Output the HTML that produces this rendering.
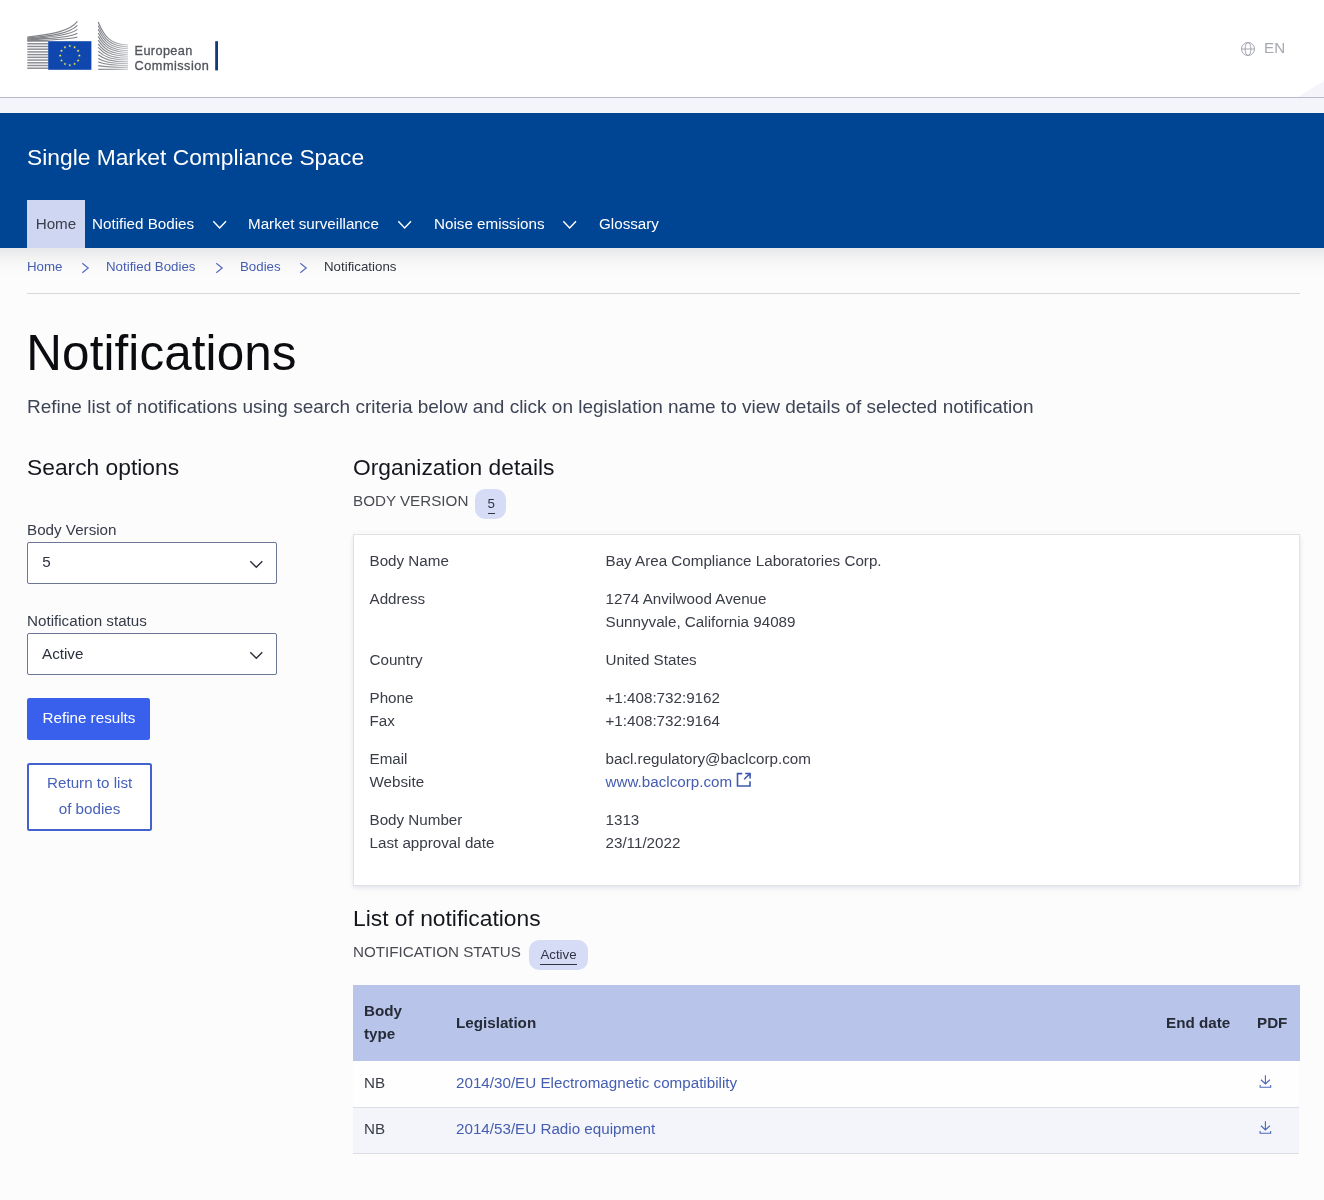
<!DOCTYPE html>
<html lang="en">
<head>
<meta charset="utf-8">
<title>Notifications - Single Market Compliance Space</title>
<style>
*{box-sizing:border-box;margin:0;padding:0}
html,body{width:1324px;height:1200px;overflow:hidden}
body{font-family:"Liberation Sans",Arial,sans-serif;color:#262b38;background:#fcfcfc;position:relative;font-size:15.2px}
a{text-decoration:none}
.t{position:absolute;white-space:nowrap;line-height:20px;font-weight:400}
.p{position:absolute}
svg{position:absolute;overflow:visible}
#w{position:absolute;left:0;top:0;width:1324px;height:1200px;background:#fcfcfc;will-change:transform}
#top{left:0;top:0;width:1324px;height:98px;background:#fff;border-bottom:1px solid #b9bcc8;overflow:hidden}
#strip{left:0;top:98px;width:1324px;height:15px;background:#f3f5fb}
#banner{left:0;top:113px;width:1324px;height:135px;background:#004494}
#shadow{left:0;top:248px;width:1324px;height:28px;background:linear-gradient(#e6e7e8,#f1f1f2 30%,#f9f9f9 65%,#fcfcfc)}
#hometab{left:27px;top:200px;width:58px;height:48px;background:#cfd6f2}
#bcline{left:27px;top:293px;width:1273px;height:1px;background:#d7d8dc}
.badge{height:30px;border-radius:10px;background:#d7dcf6}
.sel{left:27px;width:249.5px;height:42px;border:1px solid #6b7794;border-radius:2px;background:#fff}
#refine{left:27px;top:698px;width:123px;height:41.5px;background:#3860ed;border-radius:2.5px}
#ret{left:27px;top:763px;width:125px;height:67.5px;border:2px solid #4362cd;background:#fff;border-radius:2.5px}
#card{left:353px;top:534px;width:947px;height:352px;background:#fff;border:1px solid #e2e2e6;box-shadow:0 2px 4px rgba(9,49,142,.06),0 0 8px rgba(9,49,142,.03),0 4px 6px rgba(9,49,142,.03)}
#thead{left:353px;top:985px;width:947px;height:76px;background:#b8c4e9}
.row{left:353px;width:945.5px;height:46px;border-bottom:1px solid #dcdee6}
</style>
</head>
<body>
<div id="w">
<div class="p" id="top"><div class="p" style="left:1290px;top:78px;width:34px;height:20px;background:#f4f4fa;clip-path:polygon(6px 20px,34px 3px,34px 20px)"></div></div>
<div class="p" id="strip"></div>
<div class="p" id="banner"></div>
<div class="p" id="shadow"></div>
<div class="p" id="hometab"></div>
<svg style="left:0;top:0" width="240" height="98" viewBox="0 0 240 98" fill="none"><path d="M27.3 38.30H48.5" stroke="#8d8f94" stroke-width="1.5"/><path d="M27.3 41.02H48.5" stroke="#8d8f94" stroke-width="1.5"/><path d="M27.3 43.74H48.5" stroke="#8d8f94" stroke-width="1.5"/><path d="M27.3 46.46H48.5" stroke="#8d8f94" stroke-width="1.5"/><path d="M27.3 49.18H48.5" stroke="#8d8f94" stroke-width="1.5"/><path d="M27.3 51.90H48.5" stroke="#8d8f94" stroke-width="1.5"/><path d="M27.3 54.62H48.5" stroke="#8d8f94" stroke-width="1.5"/><path d="M27.3 57.34H48.5" stroke="#8d8f94" stroke-width="1.5"/><path d="M27.3 60.06H48.5" stroke="#8d8f94" stroke-width="1.5"/><path d="M27.3 62.78H48.5" stroke="#8d8f94" stroke-width="1.5"/><path d="M27.3 65.50H48.5" stroke="#8d8f94" stroke-width="1.5"/><path d="M27.3 68.22H48.5" stroke="#8d8f94" stroke-width="1.5"/><path d="M27.3 37.00C52 34.54 70 31.03 77.4 21.30" stroke="#808287" stroke-width="1.1"/><path d="M27.3 37.95C52 35.98 70 33.18 77.4 25.40" stroke="#808287" stroke-width="1.1"/><path d="M27.3 38.90C52 37.41 70 35.29 77.4 29.40" stroke="#808287" stroke-width="1.1"/><path d="M27.3 39.85C52 38.82 70 37.36 77.4 33.30" stroke="#808287" stroke-width="1.1"/><path d="M27.3 40.80C52 40.20 70 39.36 77.4 37.00" stroke="#808287" stroke-width="1.1"/><path d="M98.2 22.00C104 36.26 110 44.54 128 45.00" stroke="url(#gr)" stroke-width="1.15"/><path d="M98.2 25.64C104 38.80 110 46.44 128 46.87" stroke="url(#gr)" stroke-width="1.15"/><path d="M98.2 29.28C104 41.34 110 48.35 128 48.74" stroke="url(#gr)" stroke-width="1.15"/><path d="M98.2 32.92C104 43.88 110 50.25 128 50.61" stroke="url(#gr)" stroke-width="1.15"/><path d="M98.2 36.55C104 46.43 110 52.16 128 52.48" stroke="url(#gr)" stroke-width="1.15"/><path d="M98.2 40.19C104 48.97 110 54.06 128 54.35" stroke="url(#gr)" stroke-width="1.15"/><path d="M98.2 43.83C104 51.51 110 55.97 128 56.22" stroke="url(#gr)" stroke-width="1.15"/><path d="M98.2 47.47C104 54.05 110 57.87 128 58.08" stroke="url(#gr)" stroke-width="1.15"/><path d="M98.2 51.11C104 56.59 110 59.78 128 59.95" stroke="url(#gr)" stroke-width="1.15"/><path d="M98.2 54.75C104 59.13 110 61.68 128 61.82" stroke="url(#gr)" stroke-width="1.15"/><path d="M98.2 58.38C104 61.68 110 63.59 128 63.69" stroke="url(#gr)" stroke-width="1.15"/><path d="M98.2 62.02C104 64.22 110 65.49 128 65.56" stroke="url(#gr)" stroke-width="1.15"/><path d="M98.2 65.66C104 66.76 110 67.40 128 67.43" stroke="url(#gr)" stroke-width="1.15"/><path d="M98.2 69.30C104 69.30 110 69.30 128 69.30" stroke="url(#gr)" stroke-width="1.15"/><defs><linearGradient id="gr" x1="98" y1="0" x2="128" y2="0" gradientUnits="userSpaceOnUse"><stop offset="0" stop-color="#7d7f85"/><stop offset="0.55" stop-color="#9a9ca1"/><stop offset="1" stop-color="#c9cacd"/></linearGradient></defs><rect x="48.2" y="41.2" width="43.2" height="28.6" fill="#0f47af"/><polygon points="69.80,44.45 70.16,45.50 71.27,45.52 70.39,46.19 70.71,47.25 69.80,46.62 68.89,47.25 69.21,46.19 68.33,45.52 69.44,45.50" fill="#f5e84a"/><polygon points="74.60,45.74 74.96,46.78 76.07,46.81 75.19,47.48 75.51,48.54 74.60,47.91 73.69,48.54 74.01,47.48 73.13,46.81 74.24,46.78" fill="#f5e84a"/><polygon points="78.11,49.25 78.48,50.30 79.59,50.32 78.70,50.99 79.02,52.05 78.11,51.42 77.20,52.05 77.52,50.99 76.64,50.32 77.75,50.30" fill="#f5e84a"/><polygon points="79.40,54.05 79.76,55.10 80.87,55.12 79.99,55.79 80.31,56.85 79.40,56.22 78.49,56.85 78.81,55.79 77.93,55.12 79.04,55.10" fill="#f5e84a"/><polygon points="78.11,58.85 78.48,59.90 79.59,59.92 78.70,60.59 79.02,61.65 78.11,61.02 77.20,61.65 77.52,60.59 76.64,59.92 77.75,59.90" fill="#f5e84a"/><polygon points="74.60,62.36 74.96,63.41 76.07,63.43 75.19,64.11 75.51,65.17 74.60,64.53 73.69,65.17 74.01,64.11 73.13,63.43 74.24,63.41" fill="#f5e84a"/><polygon points="69.80,63.65 70.16,64.70 71.27,64.72 70.39,65.39 70.71,66.45 69.80,65.82 68.89,66.45 69.21,65.39 68.33,64.72 69.44,64.70" fill="#f5e84a"/><polygon points="65.00,62.36 65.36,63.41 66.47,63.43 65.59,64.11 65.91,65.17 65.00,64.53 64.09,65.17 64.41,64.11 63.53,63.43 64.64,63.41" fill="#f5e84a"/><polygon points="61.49,58.85 61.85,59.90 62.96,59.92 62.08,60.59 62.40,61.65 61.49,61.02 60.58,61.65 60.90,60.59 60.01,59.92 61.12,59.90" fill="#f5e84a"/><polygon points="60.20,54.05 60.56,55.10 61.67,55.12 60.79,55.79 61.11,56.85 60.20,56.22 59.29,56.85 59.61,55.79 58.73,55.12 59.84,55.10" fill="#f5e84a"/><polygon points="61.49,49.25 61.85,50.30 62.96,50.32 62.08,50.99 62.40,52.05 61.49,51.42 60.58,52.05 60.90,50.99 60.01,50.32 61.12,50.30" fill="#f5e84a"/><polygon points="65.00,45.74 65.36,46.78 66.47,46.81 65.59,47.48 65.91,48.54 65.00,47.91 64.09,48.54 64.41,47.48 63.53,46.81 64.64,46.78" fill="#f5e84a"/><rect x="215.2" y="41.2" width="2.8" height="29.2" fill="#12397f"/></svg>
<div class="t" style="left:134.6px;top:40.90px;font-size:12.7px;color:#50545b;letter-spacing:0.38px;-webkit-text-stroke:0.3px #50545b;">European</div>
<div class="t" style="left:134.6px;top:55.70px;font-size:12.7px;color:#50545b;letter-spacing:0.5px;-webkit-text-stroke:0.3px #50545b;">Commission</div>
<svg style="left:1240px;top:41px" width="16" height="16" viewBox="0 0 16 16" fill="none" stroke="#a3a6b0" stroke-width="1"><circle cx="8" cy="8" r="6.5"/><ellipse cx="8" cy="8" rx="2.9" ry="6.5"/><path d="M1.5 8H14.5"/></svg>
<div class="t" style="left:1264px;top:38.33px;font-size:15.2px;color:#a6a8b1;">EN</div>
<div class="t" style="left:27px;top:146.90px;font-size:22.8px;color:#fff;">Single Market Compliance Space</div>
<div class="t" style="left:35.7px;top:213.73px;font-size:15.2px;color:#3a3f4c;">Home</div>
<div class="t" style="left:92px;top:213.73px;font-size:15.2px;color:#fff;">Notified Bodies</div>
<div class="t" style="left:248px;top:213.73px;font-size:15.2px;color:#fff;">Market surveillance</div>
<div class="t" style="left:434px;top:213.73px;font-size:15.2px;color:#fff;">Noise emissions</div>
<div class="t" style="left:599px;top:213.73px;font-size:15.2px;color:#fff;">Glossary</div>
<svg style="left:212.25px;top:220.35px" width="15.3" height="9.3" viewBox="-1 -1 15.3 9.3" fill="none" stroke="#fff" stroke-width="1.45"><path d="M0.3 0.3L6.65 7.0L13.0 0.3"/></svg>
<svg style="left:396.75px;top:220.35px" width="15.3" height="9.3" viewBox="-1 -1 15.3 9.3" fill="none" stroke="#fff" stroke-width="1.45"><path d="M0.3 0.3L6.65 7.0L13.0 0.3"/></svg>
<svg style="left:562.25px;top:220.35px" width="15.3" height="9.3" viewBox="-1 -1 15.3 9.3" fill="none" stroke="#fff" stroke-width="1.45"><path d="M0.3 0.3L6.65 7.0L13.0 0.3"/></svg>
<a class="t" style="left:27px;top:257.14px;font-size:13.3px;color:#445db0;">Home</a>
<a class="t" style="left:106px;top:257.14px;font-size:13.3px;color:#445db0;">Notified Bodies</a>
<a class="t" style="left:240px;top:257.14px;font-size:13.3px;color:#445db0;">Bodies</a>
<div class="t" style="left:324px;top:257.14px;font-size:13.3px;color:#30343f;">Notifications</div>
<svg style="left:81.0px;top:261.5px" width="8.5" height="12" viewBox="-1 -1 8.5 12" fill="none" stroke="#566cbd" stroke-width="1.2"><path d="M0.3 0.3L6.2 5.0L0.3 9.7"/></svg>
<svg style="left:214.5px;top:261.5px" width="8.5" height="12" viewBox="-1 -1 8.5 12" fill="none" stroke="#566cbd" stroke-width="1.2"><path d="M0.3 0.3L6.2 5.0L0.3 9.7"/></svg>
<svg style="left:298.75px;top:261.5px" width="8.5" height="12" viewBox="-1 -1 8.5 12" fill="none" stroke="#566cbd" stroke-width="1.2"><path d="M0.3 0.3L6.2 5.0L0.3 9.7"/></svg>
<div class="p" id="bcline"></div>
<h1 class="t" style="left:26.3px;top:343.08px;font-size:49.4px;color:#0b0c10;letter-spacing:0.1px;">Notifications</h1>
<div class="t" style="left:27px;top:397.17px;font-size:19px;color:#3d4455;">Refine list of notifications using search criteria below and click on legislation name to view details of selected notification</div>
<h2 class="t" style="left:27px;top:457.10px;font-size:22.8px;color:#15171e;">Search options</h2>
<h2 class="t" style="left:353px;top:457.10px;font-size:22.8px;color:#15171e;">Organization details</h2>
<div class="t" style="left:353px;top:491.03px;font-size:15.2px;color:#494b52;">BODY VERSION</div>
<div class="p badge" style="left:475px;top:489px;width:31px"></div>
<div class="t" style="left:487.5px;top:493.64px;font-size:13.3px;color:#2f3546;border-bottom:1px solid #2f3546;line-height:19px;padding-bottom:0">5</div>
<div class="t" style="left:27px;top:520.13px;font-size:15.2px;color:#363b48;">Body Version</div>
<div class="p sel" style="top:542px"></div>
<div class="t" style="left:42.3px;top:551.93px;font-size:15.2px;color:#2b303d;">5</div>
<svg style="left:248.89999999999998px;top:559.5px" width="14.6" height="8.6" viewBox="-1 -1 14.6 8.6" fill="none" stroke="#2b303d" stroke-width="1.4"><path d="M0.3 0.3L6.3 6.3L12.299999999999999 0.3"/></svg>
<div class="t" style="left:27px;top:610.73px;font-size:15.2px;color:#363b48;">Notification status</div>
<div class="p sel" style="top:633px"></div>
<div class="t" style="left:42px;top:643.73px;font-size:15.2px;color:#2b303d;">Active</div>
<svg style="left:248.89999999999998px;top:650.7px" width="14.6" height="8.6" viewBox="-1 -1 14.6 8.6" fill="none" stroke="#2b303d" stroke-width="1.4"><path d="M0.3 0.3L6.3 6.3L12.299999999999999 0.3"/></svg>
<div class="p" id="refine"></div>
<div class="t" style="left:42.5px;top:708.43px;font-size:15.2px;color:#fff;">Refine results</div>
<div class="p" id="ret"></div>
<div class="t" style="left:47px;top:772.73px;font-size:15.2px;color:#4761ba;">Return to list</div>
<div class="t" style="left:58.7px;top:799.13px;font-size:15.2px;color:#4761ba;">of bodies</div>
<div class="p" id="card"></div>
<div class="t" style="left:369.5px;top:551.23px;font-size:15.2px;color:#3a3d47;">Body Name</div>
<div class="t" style="left:605.5px;top:551.23px;font-size:15.2px;color:#3a3d47;">Bay Area Compliance Laboratories Corp.</div>
<div class="t" style="left:369.5px;top:589.23px;font-size:15.2px;color:#3a3d47;">Address</div>
<div class="t" style="left:605.5px;top:589.23px;font-size:15.2px;color:#3a3d47;">1274 Anvilwood Avenue</div>
<div class="t" style="left:605.5px;top:612.23px;font-size:15.2px;color:#3a3d47;">Sunnyvale, California 94089</div>
<div class="t" style="left:369.5px;top:650.23px;font-size:15.2px;color:#3a3d47;">Country</div>
<div class="t" style="left:605.5px;top:650.23px;font-size:15.2px;color:#3a3d47;">United States</div>
<div class="t" style="left:369.5px;top:687.93px;font-size:15.2px;color:#3a3d47;">Phone</div>
<div class="t" style="left:605.5px;top:687.93px;font-size:15.2px;color:#3a3d47;">+1:408:732:9162</div>
<div class="t" style="left:369.5px;top:710.93px;font-size:15.2px;color:#3a3d47;">Fax</div>
<div class="t" style="left:605.5px;top:710.93px;font-size:15.2px;color:#3a3d47;">+1:408:732:9164</div>
<div class="t" style="left:369.5px;top:748.93px;font-size:15.2px;color:#3a3d47;">Email</div>
<div class="t" style="left:605.5px;top:748.93px;font-size:15.2px;color:#3a3d47;">bacl.regulatory@baclcorp.com</div>
<div class="t" style="left:369.5px;top:771.93px;font-size:15.2px;color:#3a3d47;">Website</div>
<a class="t" style="left:605.5px;top:771.93px;font-size:15.2px;color:#445db0;">www.baclcorp.com</a>
<div class="t" style="left:369.5px;top:809.93px;font-size:15.2px;color:#3a3d47;">Body Number</div>
<div class="t" style="left:605.5px;top:809.93px;font-size:15.2px;color:#3a3d47;">1313</div>
<div class="t" style="left:369.5px;top:832.93px;font-size:15.2px;color:#3a3d47;">Last approval date</div>
<div class="t" style="left:605.5px;top:832.93px;font-size:15.2px;color:#3a3d47;">23/11/2022</div>
<svg style="left:736px;top:772px" width="16" height="16" viewBox="0 0 16 16" fill="none" stroke="#3f58b0" stroke-width="1.6"><path d="M6.2 1.6H1.5V14H14V9.3"/><path d="M8.2 7.3L14 1.5M9.2 1.5H14.1V6.4"/></svg>
<h2 class="t" style="left:353px;top:907.80px;font-size:22.8px;color:#15171e;">List of notifications</h2>
<div class="t" style="left:353px;top:942.23px;font-size:15.2px;color:#494b52;">NOTIFICATION STATUS</div>
<div class="p badge" style="left:529px;top:940px;width:59px"></div>
<div class="t" style="left:540.4px;top:945.39px;font-size:13.3px;color:#2f3546;border-bottom:1px solid #2f3546;line-height:19px">Active</div>
<div class="p" id="thead"></div>
<div class="t" style="left:364px;top:1001.33px;font-size:15.2px;color:#262b38;font-weight:700;">Body</div>
<div class="t" style="left:364px;top:1024.33px;font-size:15.2px;color:#262b38;font-weight:700;">type</div>
<div class="t" style="left:456px;top:1013.03px;font-size:15.2px;color:#262b38;font-weight:700;">Legislation</div>
<div class="t" style="left:1166px;top:1013.03px;font-size:15.2px;color:#262b38;font-weight:700;">End date</div>
<div class="t" style="left:1257px;top:1013.03px;font-size:15.2px;color:#262b38;font-weight:700;">PDF</div>
<div class="p row" style="top:1061px;height:47px;background:#fefefe"></div>
<div class="p row" style="top:1108px;background:#f3f5fb"></div>
<div class="t" style="left:364px;top:1073.23px;font-size:15.2px;color:#3a3d47;">NB</div>
<a class="t" style="left:456px;top:1073.23px;font-size:15.2px;color:#445db0;">2014/30/EU Electromagnetic compatibility</a>
<svg style="left:1257.6px;top:1074.3px" width="14.8" height="14.8" viewBox="0 0 16 16" fill="none" stroke="#5068ba" stroke-width="1.2"><path d="M8 1.3V10.6M3.2 6.2L8 10.8L12.8 6.2M2.3 11.8V14.3H13.7V11.8"/></svg>
<div class="t" style="left:364px;top:1119.23px;font-size:15.2px;color:#3a3d47;">NB</div>
<a class="t" style="left:456px;top:1119.23px;font-size:15.2px;color:#445db0;">2014/53/EU Radio equipment</a>
<svg style="left:1257.6px;top:1120.3px" width="14.8" height="14.8" viewBox="0 0 16 16" fill="none" stroke="#5068ba" stroke-width="1.2"><path d="M8 1.3V10.6M3.2 6.2L8 10.8L12.8 6.2M2.3 11.8V14.3H13.7V11.8"/></svg>
</div>
</body>
</html>
